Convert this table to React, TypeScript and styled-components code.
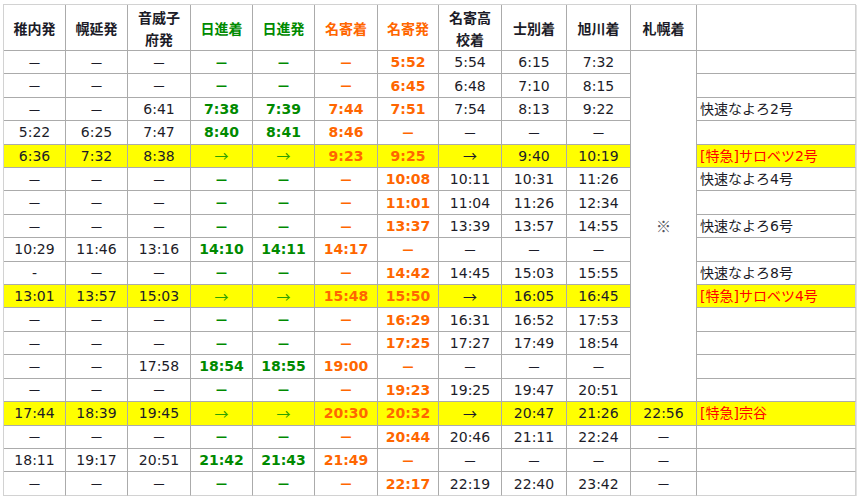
import React from 'react';
import styled, { createGlobalStyle } from 'styled-components';

const GlobalStyle = createGlobalStyle`
  body {
    margin: 0;
    background: #ffffff;
    font-family: "DejaVu Sans", "Noto Sans CJK JP", sans-serif;
  }
`;

type Tone = 'plain' | 'green' | 'orange';

// 列の定義（幅はスクリーンショットから）
const columns: { label: React.ReactNode; width: number; tone: Tone }[] = [
  { label: '稚内発', width: 62, tone: 'plain' },
  { label: '幌延発', width: 62, tone: 'plain' },
  { label: <>音威子<br />府発</>, width: 63, tone: 'plain' },
  { label: '日進着', width: 62, tone: 'green' },
  { label: '日進発', width: 62, tone: 'green' },
  { label: '名寄着', width: 63, tone: 'orange' },
  { label: '名寄発', width: 61, tone: 'orange' },
  { label: <>名寄高<br />校着</>, width: 63, tone: 'plain' },
  { label: '士別着', width: 65, tone: 'plain' },
  { label: '旭川着', width: 64, tone: 'plain' },
  { label: '札幌着', width: 66, tone: 'plain' },
  { label: '', width: 159, tone: 'plain' },
];

const D = '－';
const A = '→';

type Row = {
  times: string[];
  sapporo?: string;
  note?: string;
  express?: boolean;
};

const rows: Row[] = [
  { times: [D, D, D, D, D, D, '5:52', '5:54', '6:15', '7:32'] },
  { times: [D, D, D, D, D, D, '6:45', '6:48', '7:10', '8:15'] },
  { times: [D, D, '6:41', '7:38', '7:39', '7:44', '7:51', '7:54', '8:13', '9:22'], note: '快速なよろ2号' },
  { times: ['5:22', '6:25', '7:47', '8:40', '8:41', '8:46', D, D, D, D] },
  { times: ['6:36', '7:32', '8:38', A, A, '9:23', '9:25', A, '9:40', '10:19'], note: '[特急]サロベツ2号', express: true },
  { times: [D, D, D, D, D, D, '10:08', '10:11', '10:31', '11:26'], note: '快速なよろ4号' },
  { times: [D, D, D, D, D, D, '11:01', '11:04', '11:26', '12:34'] },
  { times: [D, D, D, D, D, D, '13:37', '13:39', '13:57', '14:55'], note: '快速なよろ6号' },
  { times: ['10:29', '11:46', '13:16', '14:10', '14:11', '14:17', D, D, D, D] },
  { times: ['-', D, D, D, D, D, '14:42', '14:45', '15:03', '15:55'], note: '快速なよろ8号' },
  { times: ['13:01', '13:57', '15:03', A, A, '15:48', '15:50', A, '16:05', '16:45'], note: '[特急]サロベツ4号', express: true },
  { times: [D, D, D, D, D, D, '16:29', '16:31', '16:52', '17:53'] },
  { times: [D, D, D, D, D, D, '17:25', '17:27', '17:49', '18:54'] },
  { times: [D, D, '17:58', '18:54', '18:55', '19:00', D, D, D, D] },
  { times: [D, D, D, D, D, D, '19:23', '19:25', '19:47', '20:51'] },
  { times: ['17:44', '18:39', '19:45', A, A, '20:30', '20:32', A, '20:47', '21:26'], sapporo: '22:56', note: '[特急]宗谷', express: true },
  { times: [D, D, D, D, D, D, '20:44', '20:46', '21:11', '22:24'], sapporo: D },
  { times: ['18:11', '19:17', '20:51', '21:42', '21:43', '21:49', D, D, D, D], sapporo: D },
  { times: [D, D, D, D, D, D, '22:17', '22:19', '22:40', '23:42'], sapporo: D },
];

const SPAN = 15;

const toneColor = (tone: Tone) =>
  tone === 'green' ? '#008a00' : tone === 'orange' ? '#ff6600' : '#1c1c28';

const Timetable = styled.table`
  margin: 4px 0 0 3px;
  border-collapse: separate;
  border-spacing: 0;
  table-layout: fixed;
  width: 853px;
  border-top: 1px solid #d2d2d2;
  border-left: 1px solid #d2d2d2;
  box-shadow: 1px 1px 0 #e2e2e2;
  font-size: 14px;
`;

const HeadCell = styled.th<{ $tone: Tone; $w: number }>`
  box-sizing: border-box;
  width: ${(p) => p.$w}px;
  height: 46px;
  padding: 0;
  border-right: 1px solid #ababab;
  border-bottom: 1px solid #ababab;
  color: ${(p) => toneColor(p.$tone)};
  font-family: "Noto Sans CJK JP", sans-serif;
  font-weight: 700;
  font-size: 14px;
  line-height: 22px;
  text-align: center;
  vertical-align: middle;

  &:last-child {
    border-right-color: #d2d2d2;
  }
`;

const BodyRow = styled.tr<{ $express?: boolean }>`
  height: 23.42px;
  background: ${(p) => (p.$express ? '#ffff00' : 'transparent')};

  &:last-child td {
    border-bottom-color: #d2d2d2;
  }
`;

const TimeCell = styled.td<{ $tone: Tone; $arrow?: boolean }>`
  box-sizing: border-box;
  padding: 0;
  border-right: 1px solid #ababab;
  border-bottom: 1px solid #ababab;
  text-align: center;
  vertical-align: middle;
  line-height: 20px;
  white-space: nowrap;
  color: ${(p) =>
    p.$arrow && p.$tone === 'green' ? '#2ea000' : p.$arrow ? '#1c1c28' : toneColor(p.$tone)};
  font-weight: ${(p) => (p.$tone !== 'plain' && !p.$arrow ? 700 : 400)};
`;

const SapporoCell = styled(TimeCell)`
  background: #ffffff;
  font-family: "Noto Sans CJK JP", sans-serif;
  font-size: 15px;
  color: #555560;
`;

const NoteCell = styled.td<{ $express?: boolean }>`
  box-sizing: border-box;
  padding: 0 0 0 3px;
  border-right: 1px solid #d2d2d2;
  border-bottom: 1px solid #ababab;
  text-align: left;
  vertical-align: middle;
  line-height: 20px;
  white-space: nowrap;
  color: ${(p) => (p.$express ? '#ff0000' : '#1c1c28')};
`;

const Dash = styled.span`
  font-family: "Noto Sans CJK JP", sans-serif;
`;

const renderValue = (v: string) =>
  v === D || v === A ? <Dash>{v}</Dash> : v;

function App() {
  return (
    <>
      <GlobalStyle />
      <Timetable>
        <thead>
          <tr>
            {columns.map((c, i) => (
              <HeadCell key={i} $tone={c.tone} $w={c.width}>
                {c.label}
              </HeadCell>
            ))}
          </tr>
        </thead>
        <tbody>
          {rows.map((r, ri) => (
            <BodyRow key={ri} $express={r.express}>
              {r.times.map((t, ci) => (
                <TimeCell key={ci} $tone={columns[ci].tone} $arrow={t === A}>
                  {renderValue(t)}
                </TimeCell>
              ))}
              {ri === 0 && (
                <SapporoCell $tone="plain" rowSpan={SPAN}>
                  ※
                </SapporoCell>
              )}
              {ri >= SPAN && (
                <TimeCell $tone="plain">{renderValue(r.sapporo ?? '')}</TimeCell>
              )}
              <NoteCell $express={r.express}>{r.note}</NoteCell>
            </BodyRow>
          ))}
        </tbody>
      </Timetable>
    </>
  );
}

export default App;
